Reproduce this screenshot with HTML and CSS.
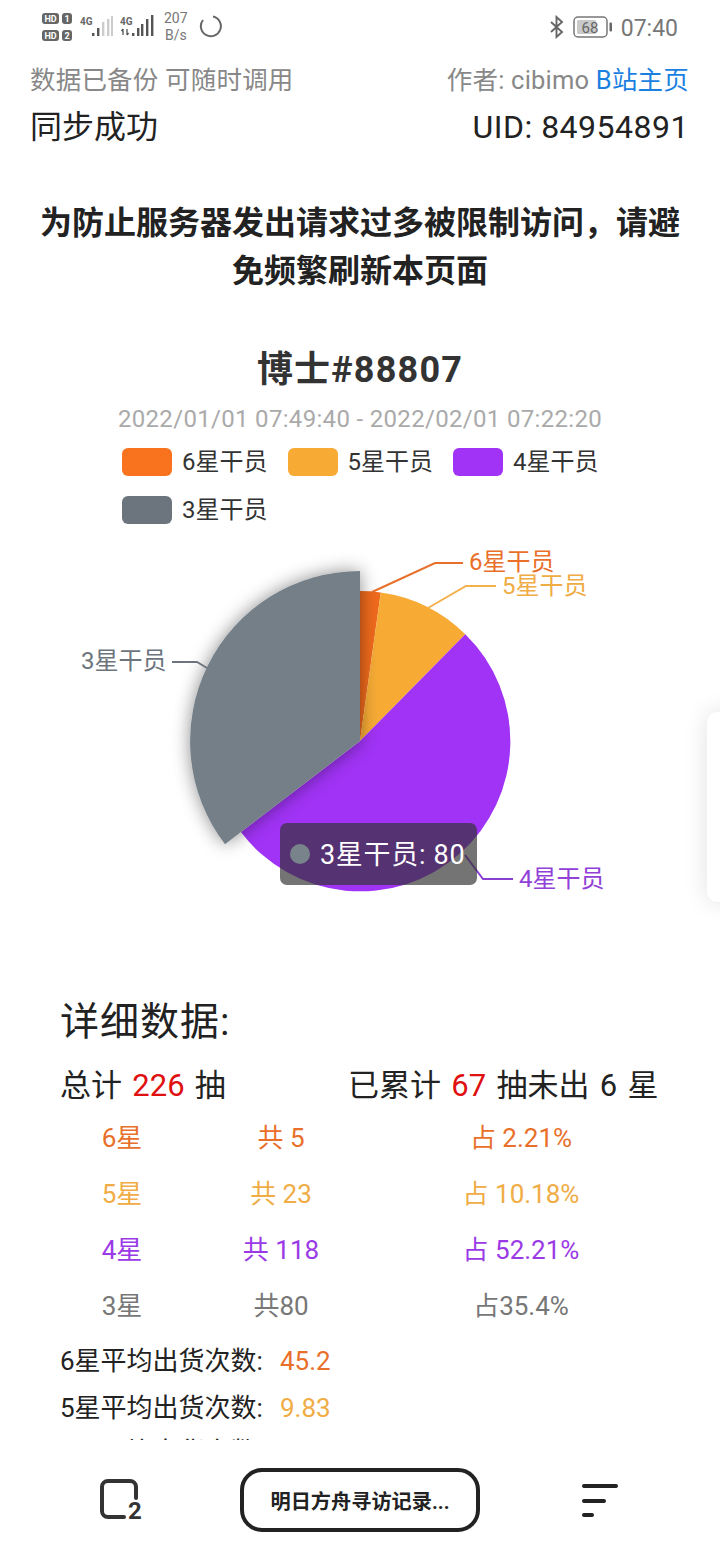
FILE: index.html
```html
<!DOCTYPE html>
<html lang="zh">
<head>
<meta charset="utf-8">
<title>明日方舟寻访记录</title>
<link rel="stylesheet" href="styles.css">
</head>
<body>
<div class="screen">
  <header class="status">
    <div class="status-left">
      <svg class="ic-hd" width="31" height="36" viewBox="0 0 31 36">
        <rect x="0" y="4" width="17" height="11" rx="3" fill="#666"/>
        <text x="8.5" y="13" class="hd-t">HD</text>
        <rect x="20" y="4" width="10" height="11" rx="3" fill="#666"/>
        <text x="25" y="13" class="hd-t">1</text>
        <rect x="0" y="21" width="17" height="11" rx="3" fill="#666"/>
        <text x="8.5" y="30" class="hd-t">HD</text>
        <rect x="20" y="21" width="10" height="11" rx="3" fill="#666"/>
        <text x="25" y="30" class="hd-t">2</text>
      </svg>
      <svg class="ic-sig" width="33" height="24" viewBox="0 0 33 24">
        <text x="0" y="11" class="g4">4G</text>
        <rect x="12" y="19" width="2.4" height="3" fill="#555"/>
        <rect x="17" y="14" width="2.4" height="8" fill="#555"/>
        <rect x="22" y="8" width="2.4" height="14" fill="#ccc"/>
        <rect x="27" y="5" width="2.4" height="17" fill="#ccc"/>
        <rect x="31" y="2" width="2" height="20" fill="#ccc"/>
      </svg>
      <svg class="ic-sig" width="34" height="24" viewBox="0 0 34 24">
        <text x="0" y="11" class="g4">4G</text>
        <path d="M3 15v6M1.5 17l1.5-2M7 15v6M7 21l1.6-2" stroke="#555" stroke-width="1.3" fill="none"/>
        <rect x="12" y="19" width="2.4" height="3" fill="#555"/>
        <rect x="17" y="14" width="2.4" height="8" fill="#555"/>
        <rect x="21" y="10" width="2.4" height="12" fill="#555"/>
        <rect x="26" y="5" width="2.4" height="17" fill="#555"/>
        <rect x="31" y="1" width="2.4" height="21" fill="#555"/>
      </svg>
      <div class="speed">207<br>B/s</div>
      <svg class="ic-ring" width="24" height="24" viewBox="0 0 24 24">
        <path d="M14 2.4A10 10 0 1 1 4 6" fill="none" stroke="#666" stroke-width="2"/>
      </svg>
    </div>
    <div class="status-right">
      <svg width="16" height="24" viewBox="0 0 16 24"><path d="M2 7l11 10-5.5 5V2L13 7 2 17" fill="none" stroke="#666" stroke-width="1.9"/></svg>
      <svg width="40" height="24" viewBox="0 0 40 24">
        <rect x="1" y="2" width="33" height="20" rx="4" fill="#fff" stroke="#777" stroke-width="1.5"/>
        <rect x="4" y="5" width="19" height="14" rx="1.5" fill="#c9c9c9"/>
        <text x="17" y="17.5" class="bat-t">68</text>
        <rect x="36.5" y="7.5" width="2.5" height="9" rx="1" fill="#666"/>
      </svg>
      <span class="clock">07:40</span>
    </div>
  </header>

  <main class="content">
    <div class="info">
      <div class="info-row info-sub"><span>数据已备份 可随时调用</span><span>作者: cibimo <a class="link">B站主页</a></span></div>
      <div class="info-row info-main"><span>同步成功</span><span class="uid">UID: 84954891</span></div>
    </div>

    <h2 class="notice">为防止服务器发出请求过多被限制访问，请避免频繁刷新本页面</h2>

    <h1 class="title">博士#88807</h1>
    <p class="date">2022/01/01 07:49:40 - 2022/02/01 07:22:20</p>

    <ul class="legend">
      <li class="legend-item"><i class="swatch c6"></i><span class="legend-text">6星干员</span></li>
      <li class="legend-item"><i class="swatch c5"></i><span class="legend-text">5星干员</span></li>
      <li class="legend-item"><i class="swatch c4"></i><span class="legend-text">4星干员</span></li>
      <li class="legend-item"><i class="swatch c3"></i><span class="legend-text">3星干员</span></li>
    </ul>

    <div class="chart">
      <svg class="pie" width="720" height="440" viewBox="0 530 720 440">
        <defs>
          <filter id="sh" x="-30%" y="-30%" width="160%" height="160%">
            <feDropShadow dx="0" dy="0" stdDeviation="9" flood-color="#000" flood-opacity=".45"/>
          </filter>
        </defs>
        <path d="M360 741V591A150 150 0 0 1 380.8 592.4Z" fill="#ef6a1c"/>
        <path d="M360 741L380.8 592.4A150 150 0 0 1 465.3 634.2Z" fill="#f7ab35"/>
        <path d="M360 741L465.3 634.2A150 150 0 1 1 240.9 832.1Z" fill="#a033f5"/>
        <path d="M360 741L225 844.2A170 170 0 0 1 360 571Z" fill="#757f88" filter="url(#sh)"/>
        <path d="M372 592L435 563H463" class="lead l6"/>
        <path d="M428 608L466 586H496" class="lead l5"/>
        <path d="M207 668L197 662H172" class="lead l3"/>
        <path d="M465 855L483 879H513" class="lead l4"/>
        <text x="469" y="570" class="lab t6">6星干员</text>
        <text x="502" y="594" class="lab t5">5星干员</text>
        <text x="81" y="669" class="lab t3">3星干员</text>
        <text x="519" y="887" class="lab t4">4星干员</text>
      </svg>
      <div class="tooltip"><i class="dot"></i><span class="tip-text">3星干员: 80</span></div>
    </div>

    <h3 class="detail">详细数据:</h3>
    <div class="summary">
      <span class="sum-a">总计 <b class="red">226</b> 抽</span>
      <span>已累计 <b class="red">67</b> 抽未出 6 星</span>
    </div>
    <div class="table">
      <span class="t6">6星</span><span class="t6">共 5</span><span class="t6">占 2.21%</span>
      <span class="t5">5星</span><span class="t5">共 23</span><span class="t5">占 10.18%</span>
      <span class="t4">4星</span><span class="t4">共 118</span><span class="t4">占 52.21%</span>
      <span class="t3">3星</span><span class="t3">共80</span><span class="t3">占35.4%</span>
    </div>
    <p class="avg avg-first">6星平均出货次数:<span class="t6 val">45.2</span></p>
    <p class="avg">5星平均出货次数:<span class="t5 val">9.83</span></p>
    <p class="avg avg-last">4星平均出货次数:<span class="t4 val">1.92</span></p>
  </main>

  <nav class="bottom">
    <svg class="tab-ic" width="44" height="42" viewBox="0 0 44 42">
      <path d="M24 38H8a6 6 0 0 1-6-6V8a6 6 0 0 1 6-6h22a6 6 0 0 1 6 6v11" fill="none" stroke="#333" stroke-width="4" stroke-linecap="round"/>
      <text x="35" y="40" class="tab-n">2</text>
    </svg>
    <button class="addr">明日方舟寻访记录...</button>
    <svg width="36" height="34" viewBox="0 0 36 34">
      <path d="M2 3H34M2 18H22M2 32H10" stroke="#222" stroke-width="4" stroke-linecap="round"/>
    </svg>
  </nav>

  <div class="handle"></div>
</div>
</body>
</html>
```
FILE: styles.css
```css
* { box-sizing: border-box; }
html, body { margin: 0; padding: 0; }
body {
  font-family: Roboto, "Noto Sans CJK SC", sans-serif;
  background: #fff;
  color: #222;
}
.screen {
  position: relative;
  width: 720px;
  height: 1560px;
  display: flex;
  flex-direction: column;
  overflow: hidden;
  background: #fff;
}
.status {
  height: 60px;
  flex: none;
  display: flex;
  justify-content: space-between;
  align-items: flex-start;
  padding: 9px 42px 0 42px;
  color: #777;
}
.status-left { display: flex; align-items: center; height: 36px; gap: 7px; }
.status-right { display: flex; align-items: center; height: 36px; gap: 8px; }
.ic-sig { margin-top: -2px; }
.ic-ring { margin-left: 4px; margin-top: -2px; }
.speed { font-size: 14px; line-height: 17px; text-align: center; color: #777; margin-left: 3px; }
.clock { font-size: 23px; color: #777; padding-top: 2px; }
.hd-t { font: 700 9px Roboto, sans-serif; fill: #fff; text-anchor: middle; }
.g4 { font: 700 10px Roboto, sans-serif; fill: #666; }
.bat-t { font: 400 15px Roboto, sans-serif; fill: #666; text-anchor: middle; }
.content { flex: 1; min-height: 0; overflow: hidden; }
.info { padding: 0 31px 0 30px; display: flex; flex-direction: column; gap: 3px; }
.info-row { display: flex; justify-content: space-between; }
.info-sub { font-size: 25.5px; line-height: 40px; letter-spacing: .2px; color: #888; }
.info-main { font-size: 32px; line-height: 48px; color: #222; }
.uid { letter-spacing: .5px; }
.link { color: #1a7fe0; }
.notice {
  margin: 48px 0 0;
  padding: 0 40px;
  font-size: 32px;
  line-height: 48px;
  font-weight: 700;
  text-align: center;
  color: #222;
}
.title {
  margin: 48px 0 0;
  font-size: 36px;
  line-height: 54px;
  letter-spacing: 1.2px;
  font-weight: 700;
  text-align: center;
  color: #333;
}
.date {
  margin: 2px 0 0;
  font-size: 24px;
  line-height: 40px;
  letter-spacing: .32px;
  text-align: center;
  color: #aaa;
}
.legend {
  list-style: none;
  margin: 9px 0 0;
  padding: 0 0 0 122px;
  display: grid;
  grid-template-columns: repeat(3, 165.5px);
  row-gap: 20px;
}
.legend-item {
  display: flex;
  align-items: center;
  gap: 10px;
  height: 28px;
  font-size: 24px;
  color: #333;
}
.legend-text { padding-bottom: 6px; }
.swatch { width: 50px; height: 28px; border-radius: 6px; display: block; }
.c6 { background: #f9731f; }
.c5 { background: #f7ab35; }
.c4 { background: #a033f5; }
.c3 { background: #6c757d; }
.chart { position: relative; height: 440px; margin-top: 6px; }
.pie { display: block; }
.lead { fill: none; stroke-width: 2; }
.l6 { stroke: #e8702a; }
.l5 { stroke: #f4b04a; }
.l4 { stroke: #8a3fd0; }
.l3 { stroke: #6c757d; }
.lab { font-size: 24px; }
.lab.t6 { fill: #e8702a; }
.lab.t5 { fill: #f0ac45; }
.lab.t4 { fill: #9140d8; }
.lab.t3 { fill: #6c757d; }
.tooltip {
  position: absolute;
  left: 280px;
  top: 293px;
  width: 197px;
  height: 62px;
  padding-left: 10px;
  display: flex;
  align-items: center;
  gap: 10px;
  border-radius: 7px;
  background: rgba(50, 50, 50, .68);
  color: #fff;
  font-size: 27px;
  letter-spacing: .7px;
  white-space: nowrap;
}
.tip-text { padding-bottom: 4px; }
.dot { width: 20px; height: 20px; border-radius: 50%; background: #78838b; display: block; flex: none; }
.detail {
  margin: 24px 0 0;
  padding-left: 60px;
  font-size: 39px;
  line-height: 56px;
  letter-spacing: 1px;
  font-weight: 400;
  color: #222;
}
.summary {
  margin-top: 14px;
  padding-left: 60px;
  display: flex;
  font-size: 31px;
  line-height: 44px;
  word-spacing: 2.6px;
  color: #222;
}
.sum-a { width: 288px; }
.red { color: #e01010; font-weight: 400; }
.table {
  margin: -1px 0 0 62px;
  display: grid;
  grid-template-columns: 120px 198px 282px;
  grid-auto-rows: 56px;
  align-items: center;
  justify-items: center;
  font-size: 26px;
}
.t6 { color: #e8702a; }
.t5 { color: #f0ac45; }
.t4 { color: #9a3ae6; }
.t3 { color: #777; }
.avg {
  margin: 0;
  padding-left: 60px;
  font-size: 26px;
  line-height: 47px;
  color: #222;
}
.avg-first { margin-top: 7px; }
.avg-last { line-height: 40px; }
.val { margin-left: 17px; }
.bottom {
  height: 120px;
  flex: none;
  display: grid;
  grid-template-columns: 240px 240px 240px;
  align-items: center;
  justify-items: center;
  background: #fff;
}
.tab-ic { margin-left: 4px; overflow: visible; }
.addr {
  width: 240px;
  height: 64px;
  border: 4px solid #222;
  border-radius: 22px;
  background: #fff;
  font: 700 20.2px Roboto, "Noto Sans CJK SC", sans-serif;
  color: #222;
  padding: 0;
}
.tab-n { font: 700 24px Roboto, sans-serif; fill: #333; text-anchor: middle; }
.handle {
  position: absolute;
  left: 707px;
  top: 712px;
  width: 40px;
  height: 190px;
  border-radius: 10px;
  background: #fff;
  box-shadow: 0 0 24px rgba(0, 0, 0, .12);
}
```
